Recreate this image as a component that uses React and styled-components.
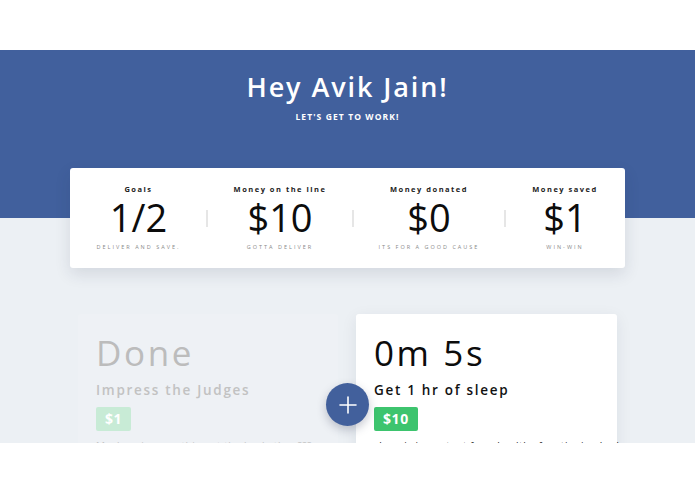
import React from "react";
import styled, { createGlobalStyle } from "styled-components";

const Global = createGlobalStyle`
  html, body { margin: 0; padding: 0; background: #ffffff; }
  body { font-family: "Open Sans", "DejaVu Sans", sans-serif; color: #111; }
  * { box-sizing: border-box; }
`;

const TopSpace = styled.div`
  height: 50px;
  background: #ffffff;
`;

const Main = styled.main`
  position: relative;
  height: 393px;
  overflow: hidden;
  background: linear-gradient(to bottom, #41609d 0, #41609d 168px, #ecf0f4 168px);
`;

const Hero = styled.header`
  text-align: center;
  padding-top: 20px;
  color: #ffffff;
`;

const Title = styled.h1`
  margin: 0;
  font-size: 27px;
  line-height: 34px;
  font-weight: 600;
  letter-spacing: 1.9px;
`;

const Subtitle = styled.p`
  margin: 7px 0 0;
  font-size: 8.5px;
  line-height: 12px;
  font-weight: 700;
  letter-spacing: 1.1px;
  text-transform: uppercase;
`;

const StatsCard = styled.section`
  width: 555px;
  margin: 45px auto 0;
  height: 100px;
  background: #ffffff;
  border-radius: 3px;
  box-shadow: 0 6px 16px rgba(30, 40, 70, 0.12);
  display: grid;
  grid-template-columns: 137px 146px 152px 1fr;
  align-items: start;
`;

const Stat = styled.div`
  position: relative;
  text-align: center;
  padding-top: 16px;
  ${(p) =>
    p.$divider &&
    `
    &::before {
      content: "";
      position: absolute;
      left: -1px;
      top: 42px;
      width: 2px;
      height: 17px;
      background: #e6e6e6;
    }
  `}
`;

const StatLabel = styled.div`
  font-size: 7.5px;
  line-height: 10px;
  font-weight: 700;
  letter-spacing: 1.5px;
  color: #222;
`;

const StatValue = styled.div`
  font-size: 38px;
  line-height: 46px;
  font-weight: 500;
  color: #0c0c0c;
`;

const StatCaption = styled.div`
  margin-top: 3px;
  font-size: 5.5px;
  line-height: 8px;
  letter-spacing: 2px;
  text-transform: uppercase;
  color: #8a8a8a;
`;

const Board = styled.div`
  position: relative;
  width: 539px;
  margin: 46px auto 0;
  display: grid;
  grid-template-columns: 260px 261px;
  column-gap: 18px;
`;

const Card = styled.article`
  background: ${(p) => (p.$done ? "#eef1f5" : "#ffffff")};
  box-shadow: ${(p) => (p.$done ? "none" : "0 4px 16px rgba(30, 40, 70, 0.08)")};
  border-radius: 3px;
  padding: 18px 18px 30px 18px;
  height: 200px;
`;

const BigText = styled.div`
  font-size: 35px;
  line-height: 42px;
  font-weight: 500;
  letter-spacing: 2.6px;
  color: ${(p) => (p.$done ? "#bcbcbc" : "#0c0c0c")};
`;

const GoalName = styled.div`
  margin-top: 7px;
  font-size: 13.5px;
  line-height: 18px;
  font-weight: 600;
  letter-spacing: 1.7px;
  color: ${(p) => (p.$done ? "#c2c2c2" : "#111")};
`;

const Badge = styled.div`
  width: fit-content;
  margin-top: 8px;
  padding: 0 9px;
  height: 24px;
  line-height: 24px;
  border-radius: 2px;
  font-size: 14px;
  font-weight: 700;
  letter-spacing: 0.6px;
  color: #ffffff;
  background: ${(p) => (p.$done ? "#c8ebd6" : "#3dc46e")};
`;

const Desc = styled.p`
  margin: 8px 0 0;
  font-size: 10px;
  line-height: 14px;
  letter-spacing: 0.5px;
  white-space: nowrap;
  color: ${(p) => (p.$done ? "#c4c4c4" : "#222")};
`;

const Fab = styled.button`
  position: absolute;
  left: 248px;
  top: 69px;
  width: 43px;
  height: 43px;
  border-radius: 50%;
  border: none;
  padding: 0;
  background: #42609c;
  box-shadow: 0 4px 10px rgba(30, 40, 70, 0.25);
  display: flex;
  align-items: center;
  justify-content: center;
`;

const stats = [
  { label: "Goals", value: "1/2", caption: "Deliver and save." },
  { label: "Money on the line", value: "$10", caption: "Gotta deliver" },
  { label: "Money donated", value: "$0", caption: "Its for a good cause" },
  { label: "Money saved", value: "$1", caption: "Win-win" },
];

export default function App() {
  return (
    <>
      <Global />
      <TopSpace />
      <Main>
        <Hero>
          <Title>Hey Avik Jain!</Title>
          <Subtitle>Let's get to work!</Subtitle>
        </Hero>
        <StatsCard>
          {stats.map((s, i) => (
            <Stat key={s.label} $divider={i > 0}>
              <StatLabel>{s.label}</StatLabel>
              <StatValue>{s.value}</StatValue>
              <StatCaption>{s.caption}</StatCaption>
            </Stat>
          ))}
        </StatsCard>
        <Board>
          <Card $done>
            <BigText $done>Done</BigText>
            <GoalName $done>Impress the Judges</GoalName>
            <Badge $done>$1</Badge>
            <Desc $done>Maybe win something at the hackathon???</Desc>
          </Card>
          <Card>
            <BigText>0m 5s</BigText>
            <GoalName>Get 1 hr of sleep</GoalName>
            <Badge>$10</Badge>
            <Desc>sleep is important for a healthy functioning body.</Desc>
          </Card>
          <Fab aria-label="Add goal">
            <svg width="20" height="20" viewBox="0 0 20 20">
              <path d="M10 2v16M2 10h16" stroke="#fff" strokeWidth="1.6" strokeLinecap="round" />
            </svg>
          </Fab>
        </Board>
      </Main>
    </>
  );
}
